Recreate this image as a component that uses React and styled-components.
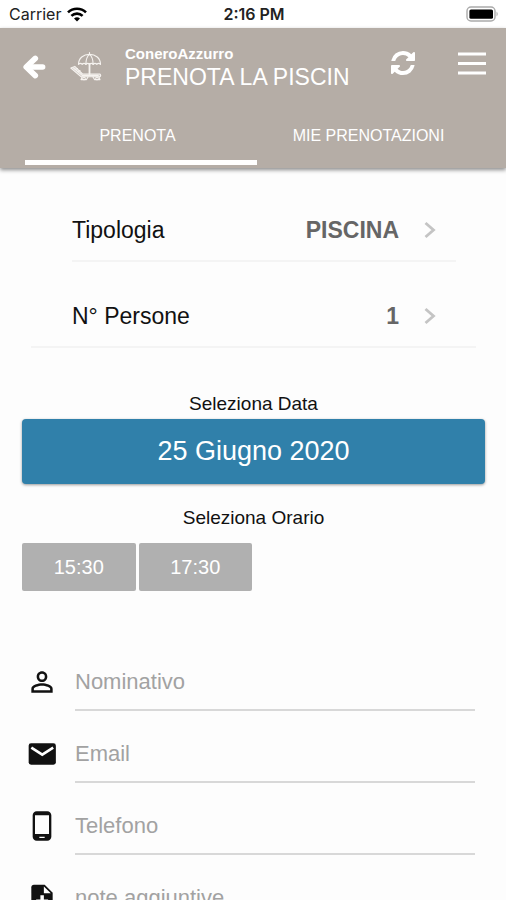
import React, { useState } from 'react'
import styled, { createGlobalStyle } from 'styled-components'
import { MdPersonOutline, MdPhoneAndroid } from 'react-icons/md'

const GlobalStyle = createGlobalStyle`
  * {
    box-sizing: border-box;
  }

  body {
    margin: 0;
    background-color: #fdfdfd;
    color: #111;
    font-family: "Liberation Sans", Arial, sans-serif;
  }

  button, input {
    font-family: inherit;
  }
`;

const Screen = styled.div`
  display: flex;
  flex-direction: column;
  height: 100vh;
`;

const StatusBar = styled.div`
  display: grid;
  grid-template-columns: 1fr auto 1fr;
  align-items: center;
  flex-shrink: 0;
  height: 28px;
  padding: 0 7px 0 9px;
  background-color: #fff;
  font-family: Inter, sans-serif;
  font-size: 16px;
  color: #222;
`;

const Carrier = styled.span`
  display: flex;
  align-items: center;
  gap: 6px;
`;

const Clock = styled.span`
  font-weight: 600;
`;

const Battery = styled.svg`
  justify-self: end;
`;

const Header = styled.header`
  flex-shrink: 0;
  background-color: #b5ada6;
  color: #fff;
  box-shadow: 0 2px 4px rgba(0, 0, 0, 0.45);
  z-index: 1;
`;

const Toolbar = styled.div`
  display: flex;
  align-items: center;
  height: 77px;
  padding: 0 20px 0 22px;
`;

const IconButton = styled.button`
  display: flex;
  padding: 0;
  border: none;
  background: none;
  color: #fff;
  cursor: pointer;
`;

const Logo = styled.svg`
  flex-shrink: 0;
  margin: 0 22px 0 24px;
`;

const Titles = styled.div`
  flex: 1;
  min-width: 0;
  overflow: hidden;
  white-space: nowrap;
`;

const Brand = styled.div`
  font-size: 15px;
  line-height: 20px;
  font-weight: bold;
`;

const Title = styled.h1`
  margin: 0;
  font-size: 23px;
  line-height: 26px;
  font-weight: normal;
`;

const Actions = styled.div`
  display: flex;
  align-items: center;
  gap: 43px;
  padding-bottom: 7px;
`;

const Tabs = styled.nav`
  display: grid;
  grid-template-columns: 1fr 1fr;
  padding: 0 22px;
`;

const Tab = styled.button`
  height: 55px;
  padding: 6px 0 0;
  border: none;
  background: none;
  color: #fff;
  font-size: 16px;
  line-height: 48px;
  cursor: pointer;
`;

const Indicator = styled.div`
  width: calc(50% - 21px);
  height: 5px;
  margin: 0 0 3px 25px;
  background-color: #fff;
`;

const Content = styled.main`
  flex: 1;
  min-height: 0;
  overflow-y: auto;
  scrollbar-width: none;
  padding: 32px 21px 0 22px;
`;

const Options = styled.div`
  display: flex;
  flex-direction: column;
  gap: 24px;
  padding: 0 9px;
`;

const Option = styled.button`
  display: flex;
  align-items: center;
  height: 62px;
  margin: ${(props) => (props.$inset ? '0 20px 0 41px' : '0')};
  padding: ${(props) => (props.$inset ? '0 20px 0 0' : '0 40px 0 41px')};
  border: none;
  border-bottom: 2px solid #f4f4f4;
  background: none;
  color: #111;
  font-size: 23px;
  text-align: left;
  cursor: pointer;
`;

const OptionValue = styled.span`
  flex: 1;
  margin-right: 25px;
  color: #666;
  font-weight: bold;
  text-align: right;
`;

const SectionLabel = styled.h2`
  margin: 0;
  font-size: 19px;
  line-height: 24px;
  font-weight: normal;
  text-align: center;
`;

const DateSection = styled.section`
  padding-top: 44px;
`;

const DateButton = styled.button`
  display: block;
  width: 100%;
  height: 65px;
  margin-top: 3px;
  border: none;
  border-radius: 4px;
  background-color: #3080aa;
  color: #fff;
  font-size: 27px;
  box-shadow: 0 1px 3px rgba(0, 0, 0, 0.4);
  cursor: pointer;
`;

const TimeSection = styled.section`
  padding-top: 22px;
`;

const Times = styled.div`
  display: grid;
  grid-template-columns: repeat(4, 1fr);
  gap: 3px;
  margin-top: 13px;
`;

const TimeButton = styled.button`
  height: 48px;
  border: none;
  border-radius: 2px;
  background-color: #b0b0b0;
  color: #fff;
  font-size: 20px;
  cursor: pointer;
`;

const Form = styled.form`
  padding: 48px 10px 0 4px;
`;

const Field = styled.label`
  display: flex;
  align-items: flex-start;
  gap: 17px;
  height: 72px;
  padding-top: 22px;
`;

const FieldIcon = styled.span`
  display: flex;
  align-items: center;
  height: 41px;
  font-size: 32px;
`;

const Input = styled.input`
  flex: 1;
  min-width: 0;
  height: 50px;
  padding: 0 0 7px;
  border: none;
  border-bottom: 2px solid #d8d8d8;
  border-radius: 0;
  outline: none;
  background: none;
  color: #111;
  font-size: 22px;

  &::placeholder {
    color: #a2a2a2;
    opacity: 1;
  }
`;

function WifiIcon() {
  return (
    <svg width="20" height="15" viewBox="0 0 20 15" fill="none" stroke="#000" strokeWidth="2.6">
      <path d="M1 5.4a13 13 0 0 1 18 0" />
      <path d="M4.4 8.9a8 8 0 0 1 11.2 0" />
      <path d="M10 14.6l-3-3a4.3 4.3 0 0 1 6 0z" fill="#000" stroke="none" />
    </svg>
  )
}

function BatteryIcon() {
  return (
    <Battery width="33" height="16" viewBox="0 0 33 16">
      <rect x="1" y="1" width="28" height="14" rx="4" fill="none" stroke="#aaa" strokeWidth="1.4" />
      <rect x="3.4" y="3.4" width="23.6" height="9.4" rx="1.6" fill="#000" />
      <path d="M30.6 5.5q2 2.5 0 5z" fill="#999" />
    </Battery>
  )
}

function BackIcon() {
  return (
    <svg width="24" height="26" viewBox="0 0 24 26" fill="none" stroke="#fff" strokeWidth="5.6" strokeLinecap="round" strokeLinejoin="round">
      <path d="M13.300 4.400L4.200 13l9.100 8.600" />
      <path d="M6 13h14.600" />
    </svg>
  )
}

// umbrella over a sun lounger
function BeachLogo() {
  return (
    <Logo width="33" height="32" viewBox="0 0 33 32" fill="none" stroke="#f6f3f0" strokeWidth="1.1" strokeLinecap="round" strokeLinejoin="round">
      <path d="M8.500 13.400C8.500 7 13.500 3.400 19.500 3.400S30.500 7 30.500 13.400q-1.900-2-3.700 0-1.800-2-3.600 0-1.800-2-3.700 0-1.800-2-3.600 0-1.900-2-3.700 0-1.800-2-3.700 0z" />
      <path d="M15.900 13.400c0-5 1.600-8.400 3.600-10 2 1.600 3.600 5 3.600 10M19.500 1.500v2" />
      <path d="M19.500 13v10" strokeWidth="1.800" />
      <path d="M.8 17l4-1.600 7.700 7.600h17.300q1.800 1.400 0 2.800H11.200z" fill="#f6f3f0" fillOpacity="0.450" />
      <path d="M3.500 17l8.700 7.400h16M5 18.500l2.500-1M7.500 20.600l2.500-1" />
      <path d="M12 26l-1 2.600h5.500l1.500-2.600M23 26l1.500 2.600H30L29 26" />
      <circle cx="14" cy="27.500" r="1.300" />
      <circle cx="27" cy="27.500" r="1.300" />
    </Logo>
  )
}

function RefreshIcon() {
  return (
    <svg width="24" height="24" viewBox="0 0 1536 1536" fill="currentColor">
      <path d="M1511 928q0 5-1 7-64 268-268 434.500t-478 166.500q-146 0-282.500-55t-243.500-157l-129 129q-19 19-45 19t-45-19-19-45v-448q0-26 19-45t45-19h448q26 0 45 19t19 45-19 45l-137 137q71 66 161 102t187 36q134 0 250-65t186-179q11-17 53-117 8-23 30-23h192q13 0 22.500 9.500t9.500 22.500zM1536 128v448q0 26-19 45t-45 19h-448q-26 0-45-19t-19-45 19-45l138-138q-148-137-349-137-134 0-250 65t-186 179q-11 17-53 117-8 23-30 23h-199q-13 0-22.500-9.500t-9.500-22.500v-7q65-268 270-434.500t480-166.500q146 0 284 55.500t245 156.500l130-129q19-19 45-19t45 19 19 45z" />
    </svg>
  )
}

function MenuIcon() {
  return (
    <svg width="28" height="24" viewBox="0 0 28 24" stroke="#fff" strokeWidth="2.8">
      <path d="M0 3h28M0 12.500h28M0 22h28" />
    </svg>
  )
}

function Chevron() {
  return (
    <svg width="12" height="18" viewBox="0 0 12 18" fill="none" stroke="#c4c4c4" strokeWidth="2.8">
      <path d="M1.500 2l8 7-8 7" />
    </svg>
  )
}

function MailIcon() {
  return (
    <svg width="1em" height="1em" viewBox="0 0 24 24">
      <rect x="2" y="4" width="20.400" height="16" rx="1.800" fill="#111" />
      <path d="M4 7.300l8.200 5.200 8.200-5.200" fill="none" stroke="#fff" strokeWidth="2" />
    </svg>
  )
}

function NoteIcon() {
  return (
    <svg width="1em" height="1em" viewBox="0 0 24 24">
      <path d="M6 2h8l6 6v12a2 2 0 0 1-2 2H6a2 2 0 0 1-2-2V4a2 2 0 0 1 2-2z" fill="#111" />
      <path d="M13.400 3.400V8.400h5.200zM10.800 10h2.600v3.200h3.200v2.600h-3.200V19h-2.600v-3.200H7.600v-2.600h3.200z" fill="#fff" />
    </svg>
  )
}

const times = ['15:30', '17:30']

const fields = [
  { name: 'nominativo', type: 'text', placeholder: 'Nominativo', icon: MdPersonOutline },
  { name: 'email', type: 'email', placeholder: 'Email', icon: MailIcon },
  { name: 'telefono', type: 'tel', placeholder: 'Telefono', icon: MdPhoneAndroid },
  { name: 'note', type: 'text', placeholder: 'note aggiuntive', icon: NoteIcon },
]

export default function App() {
  const [values, setValues] = useState({ nominativo: '', email: '', telefono: '', note: '' })

  const handleChange = (e) => {
    setValues({ ...values, [e.target.name]: e.target.value })
  }

  return (
    <Screen>
      <GlobalStyle />
      <StatusBar>
        <Carrier>Carrier <WifiIcon /></Carrier>
        <Clock>2:16 PM</Clock>
        <BatteryIcon />
      </StatusBar>

      <Header>
        <Toolbar>
          <IconButton aria-label="Indietro"><BackIcon /></IconButton>
          <BeachLogo />
          <Titles>
            <Brand>ConeroAzzurro</Brand>
            <Title>PRENOTA LA PISCIN</Title>
          </Titles>
          <Actions>
            <IconButton aria-label="Aggiorna"><RefreshIcon /></IconButton>
            <IconButton aria-label="Menu"><MenuIcon /></IconButton>
          </Actions>
        </Toolbar>
        <Tabs>
          <Tab>PRENOTA</Tab>
          <Tab>MIE PRENOTAZIONI</Tab>
        </Tabs>
        <Indicator />
      </Header>

      <Content>
        <Options>
          <Option $inset>
            <span>Tipologia</span>
            <OptionValue>PISCINA</OptionValue>
            <Chevron />
          </Option>
          <Option>
            <span>N° Persone</span>
            <OptionValue>1</OptionValue>
            <Chevron />
          </Option>
        </Options>

        <DateSection>
          <SectionLabel>Seleziona Data</SectionLabel>
          <DateButton>25 Giugno 2020</DateButton>
        </DateSection>

        <TimeSection>
          <SectionLabel>Seleziona Orario</SectionLabel>
          <Times>
            {times.map((time) => (
              <TimeButton key={time}>{time}</TimeButton>
            ))}
          </Times>
        </TimeSection>

        <Form>
          {fields.map(({ name, type, placeholder, icon: Icon }) => (
            <Field key={name}>
              <FieldIcon><Icon /></FieldIcon>
              <Input
                name={name}
                type={type}
                placeholder={placeholder}
                aria-label={placeholder}
                value={values[name]}
                onChange={handleChange}
              />
            </Field>
          ))}
        </Form>
      </Content>
    </Screen>
  )
}
